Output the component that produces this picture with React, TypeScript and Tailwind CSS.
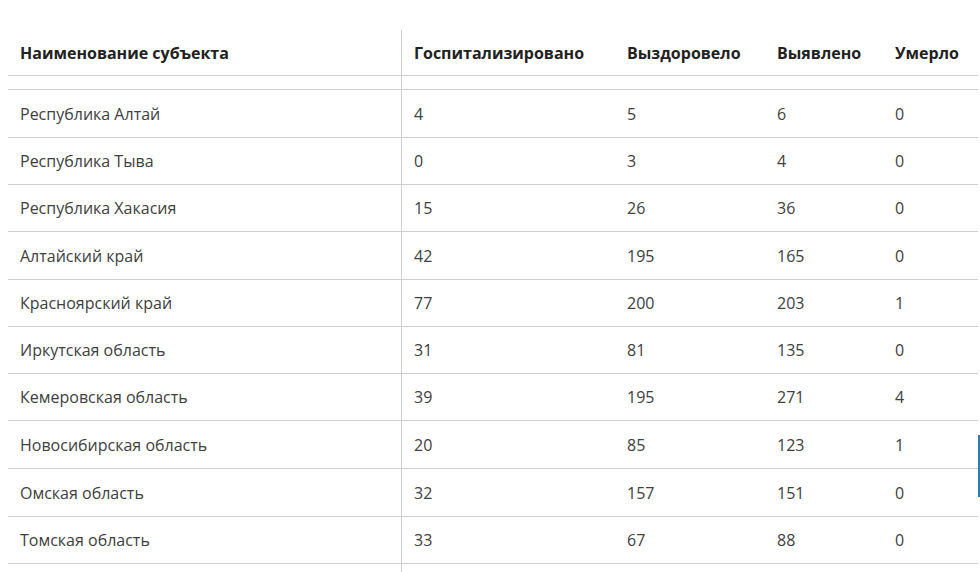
import React from "react";

const rows: [string, string, string, string, string][] = [
  ["Республика Алтай", "4", "5", "6", "0"],
  ["Республика Тыва", "0", "3", "4", "0"],
  ["Республика Хакасия", "15", "26", "36", "0"],
  ["Алтайский край", "42", "195", "165", "0"],
  ["Красноярский край", "77", "200", "203", "1"],
  ["Иркутская область", "31", "81", "135", "0"],
  ["Кемеровская область", "39", "195", "271", "4"],
  ["Новосибирская область", "20", "85", "123", "1"],
  ["Омская область", "32", "157", "151", "0"],
  ["Томская область", "33", "67", "88", "0"],
  ["", "", "", "", ""],
];

const heights = [48, 47, 47, 48, 47, 47, 47, 48, 48, 47, 47];

export default function App() {
  return (
    <div
      className="relative w-[980px] h-[572px] overflow-hidden bg-white pt-[30px] pl-[8px]"
      style={{ fontFamily: '"Open Sans", "Noto Sans", sans-serif' }}
    >
      <div className="w-[970px] text-[16px] text-[#404040]">
        <div className="grid grid-cols-[394px_213px_150px_118px_95px] h-[46px] border-b border-[#cfcfcf] font-bold text-[#222] items-center">
          <div className="h-full flex items-center pl-[12px] pt-[1px] border-r border-[#cfcfcf]">Наименование субъекта</div>
          <div className="pl-[12px] pt-[1px]">Госпитализировано</div>
          <div className="pl-[12px] pt-[1px]">Выздоровело</div>
          <div className="pl-[12px] pt-[1px]">Выявлено</div>
          <div className="pl-[12px] pt-[1px]">Умерло</div>
        </div>
        <div className="grid grid-cols-[394px_576px] h-[14px] border-b border-[#cfcfcf]">
          <div className="border-r border-[#cfcfcf]" />
          <div />
        </div>
        {rows.map((r, i) => (
          <div
            key={i}
            className="grid grid-cols-[394px_213px_150px_118px_95px] border-b border-[#cfcfcf] items-center"
            style={{ height: heights[i] }}
          >
            <div className="h-full flex items-center pl-[12px] border-r border-[#cfcfcf]">{r[0]}</div>
            <div className="pl-[12px]">{r[1]}</div>
            <div className="pl-[12px]">{r[2]}</div>
            <div className="pl-[12px]">{r[3]}</div>
            <div className="pl-[12px]">{r[4]}</div>
          </div>
        ))}
      </div>
      <div className="absolute left-[978px] top-[435px] w-[2px] h-[62px] bg-[#2b7ea8]" />
    </div>
  );
}
